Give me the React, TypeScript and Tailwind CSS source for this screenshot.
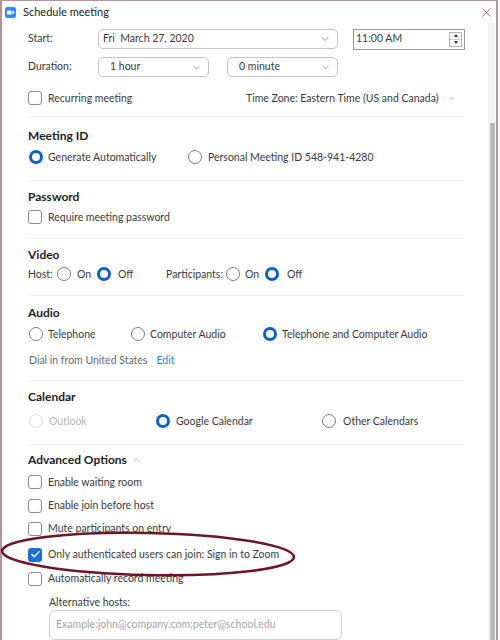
import { ChevronDown, ChevronUp, X, Check } from "lucide-react";

// ─── Small controls ───────────────────────────────────────────────────────────
const Radio = ({ on = false, faint = false }: { on?: boolean; faint?: boolean }) =>
  on ? (
    <span className="block w-[14px] h-[14px] rounded-full border-[3.5px] border-[#0b5fd0] bg-white shrink-0" />
  ) : (
    <span
      className={
        "block w-[14px] h-[14px] rounded-full border bg-white shrink-0 " +
        (faint ? "border-[#dddddd]" : "border-[#7d7d7d]")
      }
    />
  );

const Box = ({ on = false }: { on?: boolean }) =>
  on ? (
    <span className="w-[14px] h-[14px] rounded-[3px] bg-[#1a6fe0] flex items-center justify-center shrink-0">
      <Check size={11} strokeWidth={3} className="text-white" />
    </span>
  ) : (
    <span className="block w-[14px] h-[14px] rounded-[3px] border border-[#8a8a8a] bg-white shrink-0" />
  );

const Select = ({ text, w }: { text: string; w: string }) => (
  <div className={`${w} h-[20px] rounded-[5px] border border-[#c4c4c4] flex items-center justify-between pl-[11px] pr-[6px]`}>
    <span>{text}</span>
    <ChevronDown size={11} strokeWidth={1.5} className="text-[#777]" />
  </div>
);

const Divider = () => <div className="h-px bg-[#eeeeee] w-[436px]" />;

const Heading = ({ children }: { children: React.ReactNode }) => (
  <div className="h-[18px] flex items-center font-bold text-[12px] text-[#1d1d1d]">{children}</div>
);

const Row = ({ children, className = "" }: { children: React.ReactNode; className?: string }) => (
  <div className={"h-[18px] flex items-center " + className}>{children}</div>
);

const CheckRow = ({ label, on = false, mt }: { label: string; on?: boolean; mt: string }) => (
  <Row className={mt}>
    <Box on={on} />
    <span className="ml-[6px]">{label}</span>
  </Row>
);

// ─── Zoom logo ────────────────────────────────────────────────────────────────
const ZoomLogo = () => (
  <svg width="11" height="11" viewBox="0 0 11 11">
    <rect x="0" y="0" width="11" height="11" rx="2.5" fill="#2d8cff" />
    <rect x="2" y="3.5" width="4.6" height="4" rx="0.8" fill="#fff" />
    <path d="M7 5 L9.2 3.7 V7.3 L7 6 Z" fill="#fff" />
  </svg>
);

export default function App() {
  return (
    <div
      className="w-[500px] h-[640px] overflow-hidden bg-white relative text-[10.5px] text-[#3a3a3a]"
      style={{ fontFamily: "Lato, 'Open Sans', sans-serif" }}
    >
      <div className="w-[498px] h-[640px] border-l-2 border-r-2 border-t border-[#b4959a] flex flex-col">
        {/* Title bar */}
        <div className="h-[22px] shrink-0 flex items-center pl-[3px] pr-[2px]">
          <ZoomLogo />
          <span className="ml-[7px] text-[11px] text-[#222]">Schedule meeting</span>
          <X size={15} strokeWidth={1} className="ml-auto text-[#444]" />
        </div>

        <div className="flex flex-1 min-h-0">
          {/* Form */}
          <div className="flex-1 pl-[26px] flex flex-col">
            {/* Start */}
            <div className="mt-[6px] h-[20px] flex items-center">
              <span className="w-[70px]">Start:</span>
              <div className="w-[240px] h-[20px] rounded-[5px] border border-[#c4c4c4] flex items-center justify-between pl-[4px] pr-[6px]">
                <span>Fri&nbsp; March 27, 2020</span>
                <ChevronDown size={12} strokeWidth={1.5} className="text-[#777]" />
              </div>
              <div className="ml-[15px] w-[112px] h-[21px] border border-[#9a9a9a] flex items-center justify-between pl-[2px] pr-[2px]">
                <span>11:00 AM</span>
                <div className="w-[13px] h-[15px] border border-[#b5b5b5] flex flex-col">
                  <div className="flex-1 flex items-center justify-center border-b border-[#cfcfcf]">
                    <span className="w-0 h-0 border-x-[2.5px] border-x-transparent border-b-[3px] border-b-[#333]" />
                  </div>
                  <div className="flex-1 flex items-center justify-center">
                    <span className="w-0 h-0 border-x-[2.5px] border-x-transparent border-t-[3px] border-t-[#333]" />
                  </div>
                </div>
              </div>
            </div>

            {/* Duration */}
            <div className="mt-[8px] h-[20px] flex items-center">
              <span className="w-[70px]">Duration:</span>
              <Select text="1 hour" w="w-[111px]" />
              <div className="ml-[18px]">
                <Select text="0 minute" w="w-[111px]" />
              </div>
            </div>

            {/* Recurring */}
            <div className="mt-[12px] h-[20px] flex items-center">
              <div className="w-[218px] flex items-center">
                <Box />
                <span className="ml-[6px]">Recurring meeting</span>
              </div>
              <span>Time Zone: Eastern Time (US and Canada)</span>
              <ChevronDown size={9} strokeWidth={1.5} className="ml-[8px] text-[#888]" />
            </div>

            <div className="mt-[8px]"><Divider /></div>

            {/* Meeting ID */}
            <div className="mt-[10px]"><Heading>Meeting ID</Heading></div>
            <Row className="mt-[4px] pl-[1px]">
              <div className="w-[159px] flex items-center">
                <Radio on />
                <span className="ml-[5px]">Generate Automatically</span>
              </div>
              <Radio />
              <span className="ml-[6px]">Personal Meeting ID 548-941-4280</span>
            </Row>

            <div className="mt-[14px]"><Divider /></div>

            {/* Password */}
            <div className="mt-[7px]"><Heading>Password</Heading></div>
            <CheckRow mt="mt-[3px]" label="Require meeting password" />

            <div className="mt-[12px]"><Divider /></div>

            {/* Video */}
            <div className="mt-[7px]"><Heading>Video</Heading></div>
            <Row className="mt-[2px]">
              <span className="w-[29px]">Host:</span>
              <Radio />
              <span className="ml-[6px] w-[20px]">On</span>
              <Radio on />
              <span className="ml-[7px] w-[48px]">Off</span>
              <span className="w-[60px]">Participants:</span>
              <Radio />
              <span className="ml-[5px] w-[20px]">On</span>
              <Radio on />
              <span className="ml-[8px]">Off</span>
            </Row>

            <div className="mt-[12px]"><Divider /></div>

            {/* Audio */}
            <div className="mt-[8px]"><Heading>Audio</Heading></div>
            <Row className="mt-[4px] pl-[1px]">
              <div className="w-[102px] flex items-center">
                <Radio />
                <span className="ml-[5px]">Telephone</span>
              </div>
              <div className="w-[132px] flex items-center">
                <Radio />
                <span className="ml-[5px]">Computer Audio</span>
              </div>
              <Radio on />
              <span className="ml-[5px]">Telephone and Computer Audio</span>
            </Row>
            <Row className="mt-[9px] pl-[1px]">
              <span className="text-[#6a6a6a]">Dial in from United States</span>
              <span className="ml-[9px] text-[#2f7fe0]">Edit</span>
            </Row>

            <div className="mt-[11px]"><Divider /></div>

            {/* Calendar */}
            <div className="mt-[7px]"><Heading>Calendar</Heading></div>
            <Row className="mt-[7px] pl-[1px]">
              <div className="w-[127px] flex items-center">
                <Radio faint />
                <span className="ml-[6px] text-[#b3b3b3]">Outlook</span>
              </div>
              <div className="w-[166px] flex items-center">
                <Radio on />
                <span className="ml-[6px]">Google Calendar</span>
              </div>
              <Radio />
              <span className="ml-[7px]">Other Calendars</span>
            </Row>

            <div className="mt-[14px]"><Divider /></div>

            {/* Advanced */}
            <div className="mt-[6px] h-[18px] flex items-center">
              <span className="font-bold text-[12px] text-[#1d1d1d]">Advanced Options</span>
              <ChevronUp size={9} strokeWidth={1.5} className="ml-[5px] text-[#888]" />
            </div>
            <CheckRow mt="mt-[5px]" label="Enable waiting room" />
            <CheckRow mt="mt-[6px]" label="Enable join before host" />
            <CheckRow mt="mt-[6px]" label="Mute participants on entry" />
            <CheckRow mt="mt-[9px]" on label="Only authenticated users can join: Sign in to Zoom" />
            <CheckRow mt="mt-[7px]" label="Automatically record meeting" />

            <Row className="mt-[7px] pl-[21px]">
              <span>Alternative hosts:</span>
            </Row>
            <div className="-mt-[1px] ml-[21px] w-[293px] h-[30px] rounded-[6px] border border-[#cfcfcf] flex items-center pl-[6px] shrink-0">
              <span className="text-[#a5a5a5]">Example:john@company.com;peter@school.edu</span>
            </div>
          </div>

          {/* Scrollbar */}
          <div className="w-[7px] mr-[1px] bg-[#f3f3f3] flex flex-col">
            <div className="h-[100px]" />
            <div className="flex-1 ml-[2px] w-[5px] bg-[#bababa]" />
          </div>
        </div>
      </div>

      {/* Hand-drawn annotation */}
      <svg className="absolute left-0 top-0 pointer-events-none" width="500" height="640">
        <ellipse
          cx="148"
          cy="554"
          rx="146"
          ry="21"
          fill="none"
          stroke="#6e1626"
          strokeWidth="2.6"
          transform="rotate(1.2 148 554)"
        />
      </svg>
    </div>
  );
}
